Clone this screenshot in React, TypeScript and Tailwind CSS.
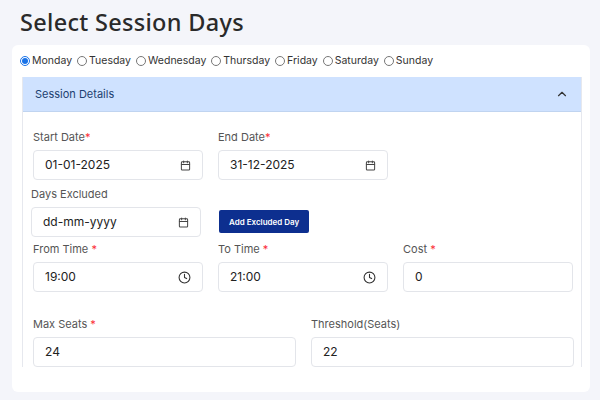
import React from 'react';
import { Calendar, Clock, ChevronUp } from "lucide-react";

const font = { fontFamily: '"Inter", "Liberation Sans", sans-serif' };

const Label = ({ text, req, gapStar }: { text: string; req?: boolean; gapStar?: boolean }) => (
  <div className="text-[11px] text-[#555] h-[14px] leading-[14px]">
    {text}
    {req && <span className="text-red-500">{gapStar ? ' *' : '*'}</span>}
  </div>
);

const Field = ({ value, icon, w }: { value: string; icon?: 'cal' | 'clock'; w: string }) => (
  <div className={`${w} h-[30px] border border-[#e3e5ea] rounded-[4px] bg-white flex items-center justify-between px-[11px] text-[12px] text-[#222]`}>
    <span>{value}</span>
    {icon === 'cal' && <Calendar className="w-[11px] h-[11px] text-[#444]" strokeWidth={2.2} />}
    {icon === 'clock' && <Clock className="w-[13px] h-[13px] text-[#333]" strokeWidth={2} />}
  </div>
);

const days = ['Monday', 'Tuesday', 'Wednesday', 'Thursday', 'Friday', 'Saturday', 'Sunday'];

export default function App() {
  return (
    <div className="w-[600px] h-[400px] bg-[#f4f5fa] overflow-hidden" style={font}>
      <h1 className="pl-[20px] pt-[5px] h-[45px] text-[23.5px] font-medium text-[#2a2a2a] tracking-[0.3px]" style={{ fontFamily: '"Noto Sans", "Liberation Sans", sans-serif' }}>
        Select Session Days
      </h1>
      <div className="ml-[12px] w-[578px] h-[347px] bg-white rounded-[6px] pt-[8px] pl-[8px]">
        <div className="flex items-center gap-[5px] text-[10.5px] text-[#333] h-[16px]">
          {days.map((d, i) => (
            <label key={d} className="flex items-center gap-[2px]">
              <span className={`w-[10px] h-[10px] rounded-full border ${i === 0 ? 'border-[#1a73e8] flex items-center justify-center' : 'border-[#777]'}`}>
                {i === 0 && <span className="w-[6px] h-[6px] rounded-full bg-[#1a73e8]" />}
              </span>
              {d}
            </label>
          ))}
        </div>
        <div className="mt-[8px] ml-[2px] w-[560px] border-x border-[#e6e8ee]">
          <div className="h-[35px] bg-[#cfe2ff] flex items-center justify-between px-[12px] text-[11px] text-[#1d3f70] border-b border-[#c0d4f0]">
            <span>Session Details</span>
            <ChevronUp className="w-[14px] h-[14px] text-[#333]" />
          </div>
          <div className="pl-[10px] pt-[18px]">
            <div className="flex gap-[15px]">
              <div className="flex flex-col gap-[6px]"><Label text="Start Date" req /><Field w="w-[170px]" value="01-01-2025" icon="cal" /></div>
              <div className="flex flex-col gap-[6px]"><Label text="End Date" req /><Field w="w-[170px]" value="31-12-2025" icon="cal" /></div>
            </div>
            <div className="flex gap-[18px] mt-[7px] -ml-[2px]">
              <div className="flex flex-col gap-[6px]"><Label text="Days Excluded" /><Field w="w-[170px]" value="dd-mm-yyyy" icon="cal" /></div>
              <div className="flex items-end pb-[4px]">
                <button className="h-[23px] px-[10px] bg-[#0d2f8f] text-white text-[8px] font-semibold rounded-[2px]">Add Excluded Day</button>
              </div>
            </div>
            <div className="flex gap-[15px] mt-[5px]">
              <div className="flex flex-col gap-[6px]"><Label text="From Time" req gapStar /><Field w="w-[170px]" value="19:00" icon="clock" /></div>
              <div className="flex flex-col gap-[6px]"><Label text="To Time" req gapStar /><Field w="w-[170px]" value="21:00" icon="clock" /></div>
              <div className="flex flex-col gap-[6px]"><Label text="Cost" req gapStar /><Field w="w-[170px]" value="0" /></div>
            </div>
            <div className="flex gap-[15px] mt-[25px]">
              <div className="flex flex-col gap-[6px]"><Label text="Max Seats" req gapStar /><Field w="w-[263px]" value="24" /></div>
              <div className="flex flex-col gap-[6px]"><Label text="Threshold(Seats)" /><Field w="w-[263px]" value="22" /></div>
            </div>
          </div>
        </div>
      </div>
    </div>
  );
}
